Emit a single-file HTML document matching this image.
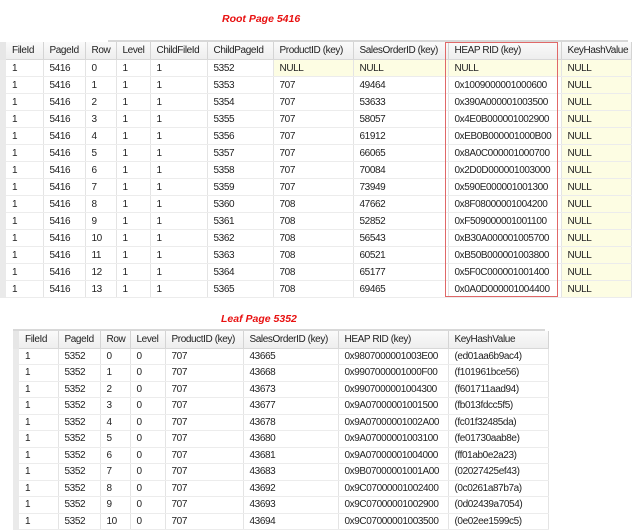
<!DOCTYPE html>
<html><head><style>
body{margin:0;background:#fff;width:640px;height:530px;overflow:hidden;position:relative;font-family:"Liberation Sans",Tahoma,sans-serif;font-size:10px;letter-spacing:-0.4px;color:#222}
.t{position:absolute;color:#e81010;font-weight:bold;font-style:italic;font-size:10.5px;letter-spacing:0}
table{position:absolute;border-collapse:collapse;table-layout:fixed}
td,th{white-space:nowrap;overflow:hidden;padding:0 0 0 6px;text-align:left;font-weight:normal;border-right:1px solid #e4e4e4;border-bottom:1px solid #ececec}
th{background:linear-gradient(#fafafa,#eeeeee);border-right:1px solid #d4d4d4;border-bottom:1px solid #d8d8d8;color:#222}
td.f{border-left:6px solid #eaeaea;padding-left:6px}
th.f{border-left:6px solid #e6e6e6;padding-left:6px}
.y{background:#fdfde3}
#a tr{height:17px} #a th{height:17px}
#b tr{height:16.5px}
</style></head><body>
<div class="t" style="left:222px;top:13px">Root Page 5416</div>
<div style="position:absolute;left:108px;top:40px;width:520px;height:2px;background:#d8d8d8"></div>
<table id="a" style="left:0;top:42px;width:628px">
<colgroup><col style="width:40px"><col style="width:42px"><col style="width:31px"><col style="width:34px"><col style="width:57px"><col style="width:66px"><col style="width:80px"><col style="width:95px"><col style="width:113px"><col style="width:70px"></colgroup>
<tr><th class="f">FileId</th><th>PageId</th><th>Row</th><th>Level</th><th>ChildFileId</th><th>ChildPageId</th><th>ProductID (key)</th><th>SalesOrderID (key)</th><th>HEAP RID (key)</th><th>KeyHashValue</th></tr>
<tr><td class="f">1</td><td>5416</td><td>0</td><td>1</td><td>1</td><td>5352</td><td class="y">NULL</td><td class="y">NULL</td><td class="y">NULL</td><td class="y">NULL</td></tr>
<tr><td class="f">1</td><td>5416</td><td>1</td><td>1</td><td>1</td><td>5353</td><td>707</td><td>49464</td><td>0x1009000001000600</td><td class="y">NULL</td></tr>
<tr><td class="f">1</td><td>5416</td><td>2</td><td>1</td><td>1</td><td>5354</td><td>707</td><td>53633</td><td>0x390A000001003500</td><td class="y">NULL</td></tr>
<tr><td class="f">1</td><td>5416</td><td>3</td><td>1</td><td>1</td><td>5355</td><td>707</td><td>58057</td><td>0x4E0B000001002900</td><td class="y">NULL</td></tr>
<tr><td class="f">1</td><td>5416</td><td>4</td><td>1</td><td>1</td><td>5356</td><td>707</td><td>61912</td><td>0xEB0B000001000B00</td><td class="y">NULL</td></tr>
<tr><td class="f">1</td><td>5416</td><td>5</td><td>1</td><td>1</td><td>5357</td><td>707</td><td>66065</td><td>0x8A0C000001000700</td><td class="y">NULL</td></tr>
<tr><td class="f">1</td><td>5416</td><td>6</td><td>1</td><td>1</td><td>5358</td><td>707</td><td>70084</td><td>0x2D0D000001003000</td><td class="y">NULL</td></tr>
<tr><td class="f">1</td><td>5416</td><td>7</td><td>1</td><td>1</td><td>5359</td><td>707</td><td>73949</td><td>0x590E000001001300</td><td class="y">NULL</td></tr>
<tr><td class="f">1</td><td>5416</td><td>8</td><td>1</td><td>1</td><td>5360</td><td>708</td><td>47662</td><td>0x8F08000001004200</td><td class="y">NULL</td></tr>
<tr><td class="f">1</td><td>5416</td><td>9</td><td>1</td><td>1</td><td>5361</td><td>708</td><td>52852</td><td>0xF509000001001100</td><td class="y">NULL</td></tr>
<tr><td class="f">1</td><td>5416</td><td>10</td><td>1</td><td>1</td><td>5362</td><td>708</td><td>56543</td><td>0xB30A000001005700</td><td class="y">NULL</td></tr>
<tr><td class="f">1</td><td>5416</td><td>11</td><td>1</td><td>1</td><td>5363</td><td>708</td><td>60521</td><td>0xB50B000001003800</td><td class="y">NULL</td></tr>
<tr><td class="f">1</td><td>5416</td><td>12</td><td>1</td><td>1</td><td>5364</td><td>708</td><td>65177</td><td>0x5F0C000001001400</td><td class="y">NULL</td></tr>
<tr><td class="f">1</td><td>5416</td><td>13</td><td>1</td><td>1</td><td>5365</td><td>708</td><td>69465</td><td>0x0A0D000001004400</td><td class="y">NULL</td></tr>
</table>
<div style="position:absolute;left:445px;top:42px;width:111px;height:253px;border:1px solid #e06868"></div>
<div class="t" style="left:221px;top:313px">Leaf Page 5352</div>
<div style="position:absolute;left:13px;top:329px;width:532px;height:2px;background:#d8d8d8"></div>
<table id="b" style="left:13px;top:331px;width:532px">
<colgroup><col style="width:42px"><col style="width:42px"><col style="width:30px"><col style="width:35px"><col style="width:78px"><col style="width:95px"><col style="width:110px"><col style="width:100px"></colgroup>
<tr style="height:17px"><th class="f">FileId</th><th>PageId</th><th>Row</th><th>Level</th><th>ProductID (key)</th><th>SalesOrderID (key)</th><th>HEAP RID (key)</th><th>KeyHashValue</th></tr>
<tr><td class="f">1</td><td>5352</td><td>0</td><td>0</td><td>707</td><td>43665</td><td>0x9807000001003E00</td><td>(ed01aa6b9ac4)</td></tr>
<tr><td class="f">1</td><td>5352</td><td>1</td><td>0</td><td>707</td><td>43668</td><td>0x9907000001000F00</td><td>(f101961bce56)</td></tr>
<tr><td class="f">1</td><td>5352</td><td>2</td><td>0</td><td>707</td><td>43673</td><td>0x9907000001004300</td><td>(f601711aad94)</td></tr>
<tr><td class="f">1</td><td>5352</td><td>3</td><td>0</td><td>707</td><td>43677</td><td>0x9A07000001001500</td><td>(fb013fdcc5f5)</td></tr>
<tr><td class="f">1</td><td>5352</td><td>4</td><td>0</td><td>707</td><td>43678</td><td>0x9A07000001002A00</td><td>(fc01f32485da)</td></tr>
<tr><td class="f">1</td><td>5352</td><td>5</td><td>0</td><td>707</td><td>43680</td><td>0x9A07000001003100</td><td>(fe01730aab8e)</td></tr>
<tr><td class="f">1</td><td>5352</td><td>6</td><td>0</td><td>707</td><td>43681</td><td>0x9A07000001004000</td><td>(ff01ab0e2a23)</td></tr>
<tr><td class="f">1</td><td>5352</td><td>7</td><td>0</td><td>707</td><td>43683</td><td>0x9B07000001001A00</td><td>(02027425ef43)</td></tr>
<tr><td class="f">1</td><td>5352</td><td>8</td><td>0</td><td>707</td><td>43692</td><td>0x9C07000001002400</td><td>(0c0261a87b7a)</td></tr>
<tr><td class="f">1</td><td>5352</td><td>9</td><td>0</td><td>707</td><td>43693</td><td>0x9C07000001002900</td><td>(0d02439a7054)</td></tr>
<tr><td class="f">1</td><td>5352</td><td>10</td><td>0</td><td>707</td><td>43694</td><td>0x9C07000001003500</td><td>(0e02ee1599c5)</td></tr>
</table>
</body></html>
